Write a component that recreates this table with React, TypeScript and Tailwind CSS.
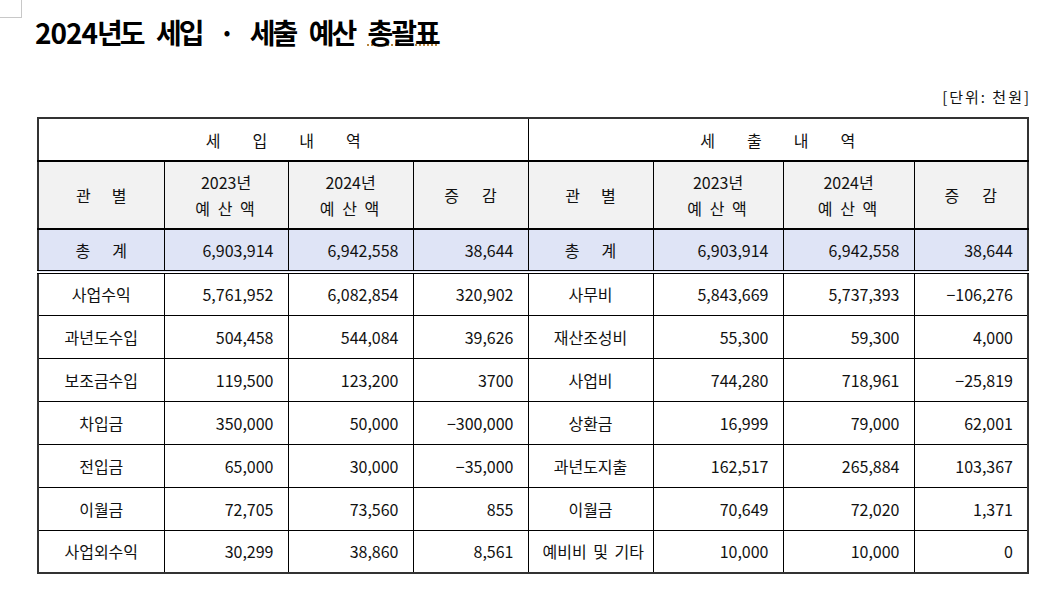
import React from 'react';

type Row = [string, string, string, string];

const incomeRows: Row[] = [
  ['사업수익', '5,761,952', '6,082,854', '320,902'],
  ['과년도수입', '504,458', '544,084', '39,626'],
  ['보조금수입', '119,500', '123,200', '3700'],
  ['차입금', '350,000', '50,000', '−300,000'],
  ['전입금', '65,000', '30,000', '−35,000'],
  ['이월금', '72,705', '73,560', '855'],
  ['사업외수익', '30,299', '38,860', '8,561'],
];

const expenseRows: Row[] = [
  ['사무비', '5,843,669', '5,737,393', '−106,276'],
  ['재산조성비', '55,300', '59,300', '4,000'],
  ['사업비', '744,280', '718,961', '−25,819'],
  ['상환금', '16,999', '79,000', '62,001'],
  ['과년도지출', '162,517', '265,884', '103,367'],
  ['이월금', '70,649', '72,020', '1,371'],
  ['예비비 및 기타', '10,000', '10,000', '0'],
];

// spaced-out labels such as "관   별"
const Spaced = ({ text, gap }: { text: string; gap: string }) => (
  <span className={`inline-flex justify-center ${gap}`}>
    {text.split('').map((ch, i) => (
      <span key={i}>{ch}</span>
    ))}
  </span>
);

const cell = 'border border-black px-[14px] text-center';
const num = 'border border-black pr-[14px] text-right';

const HeaderCells = () => (
  <>
    <td className={cell}>
      <Spaced text="관별" gap="gap-[21px]" />
    </td>
    <td className={`${cell} leading-[26px]`}>
      2023년
      <br />
      <span className="tracking-[2px]">예 산 액</span>
    </td>
    <td className={`${cell} leading-[26px]`}>
      2024년
      <br />
      <span className="tracking-[2px]">예 산 액</span>
    </td>
    <td className={cell}>
      <Spaced text="증감" gap="gap-[23px]" />
    </td>
  </>
);

const TotalCells = () => (
  <>
    <td className={cell}>
      <Spaced text="총계" gap="gap-[22px]" />
    </td>
    <td className={num}>6,903,914</td>
    <td className={num}>6,942,558</td>
    <td className={num}>38,644</td>
  </>
);

export default function App() {
  return (
    <div className="relative w-[1063px] h-[599px] overflow-hidden bg-white pl-[37px] pt-[14px] font-['Noto_Sans_CJK_KR',sans-serif] text-[#111]">
      {/* page corner mark */}
      <div className="absolute left-0 top-0 h-[18px] w-[22px] border-b border-r border-[#c8c8c8]" />

      <h1 className="-ml-[2px] whitespace-nowrap text-[28px] font-bold leading-[36px] tracking-[-3px] text-black [word-spacing:10px]">
        <span className="tracking-[-1px]">2024</span>년도 세입 <span className="mx-[4px]">·</span> 세출 예산{' '}
        <span className="tracking-[-2px] underline decoration-dotted decoration-[#b8843a] decoration-2 underline-offset-[0px]">
          총괄표
        </span>
      </h1>

      <div className="mt-[37px] w-[994px] text-right text-[15px] leading-[20px] tracking-[2px]">
        [단위: 천원]
      </div>

      <table className="mt-[10px] w-[990px] table-fixed border-collapse border-2 border-[#333] text-[16px]">
        <colgroup>
          <col className="w-[126px]" />
          <col className="w-[124px]" />
          <col className="w-[125px]" />
          <col className="w-[115px]" />
          <col className="w-[125px]" />
          <col className="w-[130px]" />
          <col className="w-[131px]" />
          <col className="w-[114px]" />
        </colgroup>
        <tbody>
          <tr className="h-[43px]">
            <td colSpan={4} className="border border-black border-b-2 text-center">
              <Spaced text="세입내역" gap="gap-[32px]" />
            </td>
            <td colSpan={4} className="border border-black border-b-2 text-center">
              <Spaced text="세출내역" gap="gap-[32px]" />
            </td>
          </tr>
          <tr className="h-[68px] bg-[#f2f2f2] border-b-2 border-black">
            <HeaderCells />
            <HeaderCells />
          </tr>
          <tr className="h-[43px] bg-[#dfe4f6] border-b-4 border-double border-black">
            <TotalCells />
            <TotalCells />
          </tr>
          {incomeRows.map((inc, i) => {
            const exp = expenseRows[i];
            return (
              <tr key={i} className="h-[43px]">
                <td className={cell}>{inc[0]}</td>
                <td className={num}>{inc[1]}</td>
                <td className={num}>{inc[2]}</td>
                <td className={num}>{inc[3]}</td>
                <td className={`${cell} px-0 whitespace-nowrap [word-spacing:3px]`}>{exp[0]}</td>
                <td className={num}>{exp[1]}</td>
                <td className={num}>{exp[2]}</td>
                <td className={num}>{exp[3]}</td>
              </tr>
            );
          })}
        </tbody>
      </table>
    </div>
  );
}
